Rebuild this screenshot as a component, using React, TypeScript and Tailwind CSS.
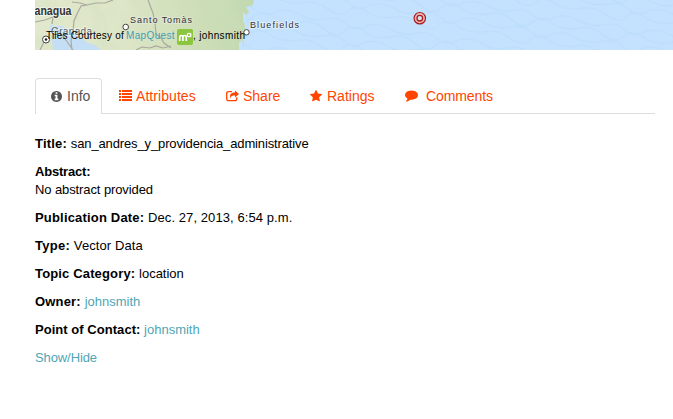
import type { ReactNode } from "react";

const icons = {
  info: "M1024 1376v-160q0-14-9-23t-23-9h-96v-512q0-14-9-23t-23-9h-320q-14 0-23 9t-9 23v160q0 14 9 23t23 9h96v320h-96q-14 0-23 9t-9 23v160q0 14 9 23t23 9h448q14 0 23-9t9-23zm-128-896v-160q0-14-9-23t-23-9h-192q-14 0-23 9t-9 23v160q0 14 9 23t23 9h192q14 0 23-9t9-23zm640 416q0 209-103 385.500t-279.500 279.500-385.500 103-385.500-103-279.500-279.500-103-385.500 103-385.500 279.500-279.500 385.500-103 385.500 103 279.500 279.500 103 385.500z",
  star: "M1664 647q0 22-26 48l-363 354 86 500q1 7 1 20 0 21-10.500 35.500t-30.500 14.500q-19 0-40-12l-449-236-449 236q-22 12-40 12-21 0-31.500-14.500t-10.500-35.500q0-6 2-20l86-500-364-354q-25-27-25-48 0-37 56-46l502-73 225-455q19-41 49-41t49 41l225 455 502 73q56 9 56 46z",
  comment: "M1792 896q0 174-120 321.500t-326 233-450 85.500q-70 0-145-8-198 175-460 242-49 14-114 22-17 2-30.500-9t-17.500-29v-1q-3-4-.5-12t2-10 4.500-9.500l6-9 7-8.500 8-9q7-8 31-34.500t34.500-38 31-39.500 32.500-51 27-59 26-76q-157-89-247.500-220t-90.500-281q0-174 120-321.500t326-233 450-85.500 450 85.500 326 233 120 321.500z",
};

function Glyph({ d, className, box }: { d: string; className: string; box: string }) {
  return <svg viewBox={box} fill="currentColor" className={className} aria-hidden="true"><path d={d} /></svg>;
}

function ListIcon() {
  return (
    <svg viewBox="0 0 13 11" className="mr-[4px] h-[11px] w-[13px]" fill="currentColor" shapeRendering="crispEdges">
      <path d="M0 0h2v2H0zM0 3h2v2H0zM0 6h2v2H0zM0 9h2v2H0zM3 0h10v2H3zM3 3h10v2H3zM3 6h10v2H3zM3 9h10v2H3z" />
    </svg>
  );
}

function ShareIcon() {
  return (
    <svg viewBox="0 0 13 12" className="mr-[4px] h-[12px] w-[13px]" fill="none" stroke="currentColor">
      <path d="M6 1.6H2.6Q.7 1.6.7 3.5v5.3q0 1.900 1.900 1.900h6.300q1.900 0 1.900-1.900V7.300" strokeWidth="1.300" />
      <path d="M9 .5v2C5.500 2.500 3 4 4.500 8.400 4.800 6 6.400 5.600 9 5.600v2L13 4z" fill="currentColor" stroke="none" />
    </svg>
  );
}

function MapStrip() {
  return (
    <div className="relative ml-[35px] h-[50px] overflow-hidden bg-[#c4e2fe]">
      <svg width="638" height="50" viewBox="35 0 638 50" className="absolute inset-0 font-['Liberation_Sans',Arial,sans-serif]">
        <defs>
          <pattern id="waves" width="92" height="38" patternUnits="userSpaceOnUse" patternTransform="rotate(9)">
            <path d="M0 5q12-4 24 1t24 0 22 2 22-3M0 14q14 4 25-1t24 3 21-2 22 0M0 22q12-4 23 1t25 0 23 2 21-3M0 32q15 3 25-1t25 3 20-2 22 0" fill="none" stroke="#b6d9f8" strokeWidth="1.500" opacity=".5" />
          </pattern>
          <filter id="relief" x="0" y="0" width="100%" height="100%">
            <feTurbulence type="fractalNoise" baseFrequency=".055" numOctaves="4" seed="5" />
            <feColorMatrix values="0 0 0 0 .64  0 0 0 0 .74  0 0 0 0 .52  2.200 0 0 0 -.85" />
            <feComposite in2="SourceGraphic" operator="in" />
          </filter>
          <linearGradient id="terrain">
            <stop offset="0" stopColor="#e1e8cc" />
            <stop offset=".4" stopColor="#dee6c8" />
            <stop offset=".7" stopColor="#cfdfb8" />
            <stop offset="1" stopColor="#c1d8b0" />
          </linearGradient>
        </defs>
        <rect x="35" width="638" height="50" fill="#c4e2fe" />
        <rect x="220" width="453" height="50" fill="url(#waves)" />
        <path d="M35 0H254l-1 5-7 2 3 5-5 6 1 9 1 8-3 3 1 12H35z" fill="url(#terrain)" />
        <path d="M35 0H254l-1 5-7 2 3 5-5 6 1 9 1 8-3 3 1 12H35z" fill="#fff" filter="url(#relief)" opacity=".45" />
        <path d="M243 12l4 4-1 8-3-2zM239 42l3-2 2 10h-5z" fill="#c4e2fe" />
        <path d="M50 25l12 1 6 4 8 4 7 5 5 4 7 2 6 5H53l-1-10-2-9z" fill="#c4dff5" />
        <g fill="none" stroke="#aaa99f" strokeWidth="1.200">
          <path d="M113 0l-8 3-9 0-9 2-6 1-4 8-3 7-1 10-2 10 1 9M35 22l10-2 8-3M53 17l-1 7M55 27l7 8 6 8 5 7M87 5l-7-2-8-1M44 42l-4 8" />
          <path d="M148 0l3 8 2 5 2 10 1 11 5 4 3 5 7 5M136 50l6-3 8 1 6-2 7 2 8-2" />
        </g>
        <g fill="#333" stroke="#fff" strokeWidth="1.800" paintOrder="stroke" strokeOpacity=".5">
          <text x="34.500" y="15" fontSize="12" fontWeight="bold" textLength="37" lengthAdjust="spacingAndGlyphs">anagua</text>
          <text x="130" y="23" fontSize="9" textLength="62" stroke="#eee">Santo Tomàs</text>
          <text x="250" y="28" fontSize="9" textLength="49">Bluefields</text>
          <text x="51" y="35" fontSize="10" fill="#53636b" textLength="41">Granada</text>
        </g>
        <g fill="#fff" stroke="#444">
          <circle cx="125.700" cy="27" r="2.800" />
          <circle cx="246.500" cy="32.300" r="2.700" />
          <circle cx="46" cy="39.500" r="3.500" />
        </g>
        <circle cx="46" cy="39.500" r="1.300" fill="#222" />
        <circle cx="419.800" cy="18.200" r="4.500" fill="#d7e5f0" stroke="#efb7b7" strokeWidth="3" />
        <circle cx="419.800" cy="18.200" r="5.700" fill="none" stroke="#a81d20" strokeWidth="1.200" />
        <circle cx="419.800" cy="18.200" r="2.800" fill="none" stroke="#a81d20" strokeWidth="1.300" />
      </svg>
      <div className="absolute left-[11px] top-[28px] flex h-4 items-center whitespace-pre font-['Liberation_Sans',Arial,sans-serif] text-[10px] leading-4 text-black">
        <span className="w-[80px] tracking-[0.190px]">Tiles Courtesy of </span>
        <a className="w-[51px] tracking-[0.350px] text-[#3f9eb6]">MapQuest</a>
        <svg width="16" height="16" viewBox="0 0 16 16" className="relative top-px">
          <rect width="16" height="16" rx="2" fill="#8cc63f" />
          <path d="M2.700 12V8.500q0-2 1.600-2t1.600 2V12M5.900 8.500q0-2 1.700-2t1.700 2V12" fill="none" stroke="#fff" strokeWidth="1.700" />
          <circle cx="12" cy="6" r="1.700" fill="none" stroke="#fff" strokeWidth="1.200" />
          <path d="M13.800 4v4.300" stroke="#fff" />
        </svg>
        <span className="tracking-[0.360px]">, johnsmith</span>
      </div>
    </div>
  );
}

function Detail({ label, children, labelClass = "tracking-[0.150px]", valueClass = "" }: { label: string; children: ReactNode; labelClass?: string; valueClass?: string }) {
  return <p className={valueClass}><strong className={labelClass}>{label}: </strong>{children}</p>;
}

const Link = ({ children }: { children: ReactNode }) => <a className="text-[#4fa5b5]">{children}</a>;

export default function App() {
  return (
    <main className="h-[419px] w-[673px] overflow-hidden bg-white font-['Liberation_Sans',Arial,sans-serif] text-black">
      <MapStrip />
      <nav className="ml-[35px] mt-7 flex h-9 w-[620px] border-b border-[#ddd] text-[14px] leading-[18px] text-[#ff4500]">
        <a className="flex h-9 w-[67px] shrink-0 items-center rounded-t border border-b-0 border-[#ddd] bg-white pb-px pl-[15px] text-[#555]">
          <Glyph d={icons.info} box="0 128 1536 1536" className="mr-[5px] h-[11px] w-[11px]" />Info
        </a>
        <a className="ml-[17px] flex w-[107px] shrink-0 items-center"><ListIcon /><span className="tracking-[0.060px]">Attributes</span></a>
        <a className="flex w-[84px] shrink-0 items-center"><ShareIcon />Share</a>
        <a className="flex w-[95px] shrink-0 items-center"><Glyph d={icons.star} box="0 64 1664 1600" className="mr-[5px] h-[12px] w-[12px]" />Ratings</a>
        <a className="flex shrink-0 items-center"><Glyph d={icons.comment} box="0 256 1792 1536" className="mr-[8px] h-[12px] w-[13px]" /><span className="tracking-[-0.100px]">Comments</span></a>
      </nav>
      <section className="ml-[35px] mt-[21px] flex flex-col gap-[10px] text-[13px] leading-[18px]">
        <Detail label="Title" labelClass="tracking-[0.200px]" valueClass="tracking-[-0.130px]">san_andres_y_providencia_administrative</Detail>
        <Detail label="Abstract" labelClass="tracking-[-0.200px]" valueClass="tracking-[-0.100px]"><br />No abstract provided</Detail>
        <Detail label="Publication Date" labelClass="tracking-[0.180px]" valueClass="tracking-[0.080px]">Dec. 27, 2013, 6:54 p.m.</Detail>
        <Detail label="Type" labelClass="tracking-[0.250px]" valueClass="tracking-[0.100px]">Vector Data</Detail>
        <Detail label="Topic Category">location</Detail>
        <Detail label="Owner" labelClass="tracking-[0.180px]"><Link>johnsmith</Link></Detail>
        <Detail label="Point of Contact" labelClass="tracking-[0.040px]"><Link>johnsmith</Link></Detail>
        <p className="tracking-[-0.100px]"><Link>Show/Hide</Link></p>
      </section>
    </main>
  );
}
